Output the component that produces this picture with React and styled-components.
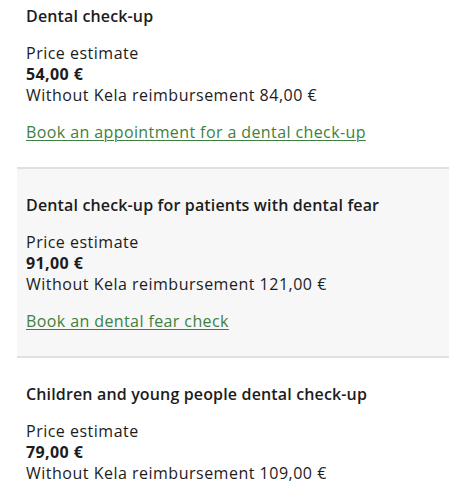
import React from 'react';
import styled, { createGlobalStyle } from 'styled-components';

const GlobalStyle = createGlobalStyle`
  body {
    margin: 0;
    background: #ffffff;
    font-family: "Open Sans", "Liberation Sans", sans-serif;
    color: #1c1c1c;
  }
`;

const Page = styled.div`
  padding: 0 17px;
  margin-top: -20px;
`;

const Card = styled.section`
  background: ${(p) => (p.$shaded ? '#f7f7f7' : '#ffffff')};
  border-bottom: ${(p) => (p.$last ? 'none' : '2px solid #e0e0e0')};
  padding: 26px 9px 24px;
`;

const Title = styled.h3`
  margin: 0 0 16px;
  font-size: 16px;
  line-height: 21px;
  font-weight: 600;
  letter-spacing: 0.15px;
`;

const Line = styled.div`
  font-size: 16px;
  line-height: 21px;
  letter-spacing: ${(p) => (p.$bold ? '0.4px' : '0.5px')};
  font-weight: ${(p) => (p.$bold ? 700 : 400)};
`;

const BookLink = styled.a`
  display: inline-block;
  margin-top: 16px;
  font-size: 16px;
  line-height: 21px;
  letter-spacing: 0.4px;
  color: #3f7f40;
  text-decoration: underline;
  text-underline-offset: 2px;
  text-decoration-thickness: 1px;
`;

const services = [
  {
    title: 'Dental check-up',
    price: '54,00 €',
    full: '84,00 €',
    link: 'Book an appointment for a dental check-up',
  },
  {
    title: 'Dental check-up for patients with dental fear',
    price: '91,00 €',
    full: '121,00 €',
    link: 'Book an dental fear check',
    shaded: true,
  },
  {
    title: 'Children and young people dental check-up',
    price: '79,00 €',
    full: '109,00 €',
    link: null,
  },
];

export default function App() {
  return (
    <>
      <GlobalStyle />
      <Page>
        {services.map((s, i) => (
          <Card key={s.title} $shaded={s.shaded} $last={i === services.length - 1}>
            <Title>{s.title}</Title>
            <Line>Price estimate</Line>
            <Line $bold>{s.price}</Line>
            <Line>Without Kela reimbursement {s.full}</Line>
            {s.link && <BookLink href="#">{s.link}</BookLink>}
          </Card>
        ))}
      </Page>
    </>
  );
}
